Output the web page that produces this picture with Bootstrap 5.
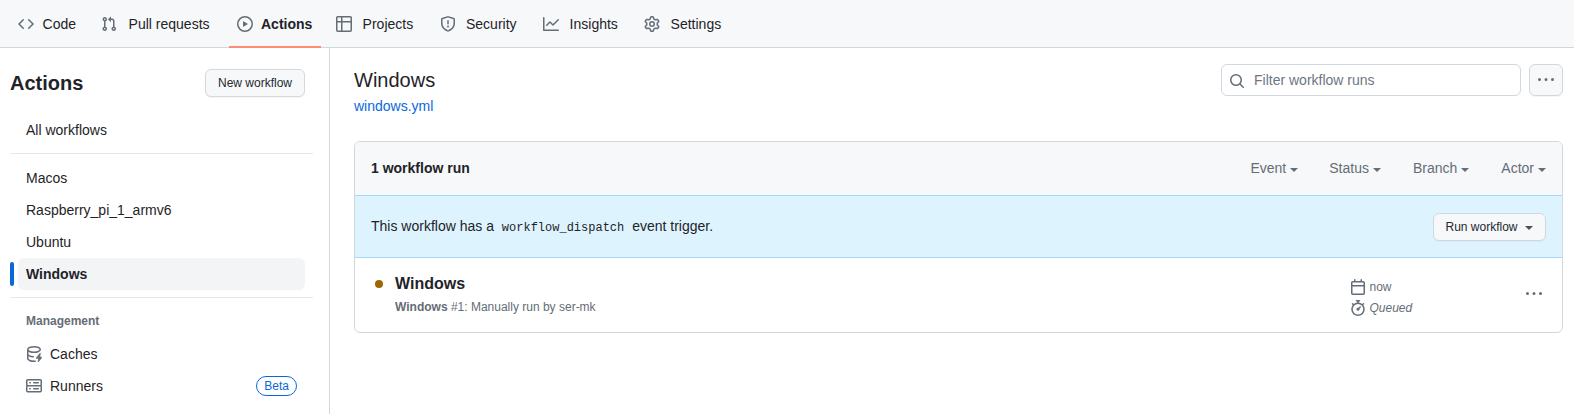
<!DOCTYPE html>
<html lang="en">
<head>
<meta charset="utf-8">
<meta name="viewport" content="width=device-width, initial-scale=1">
<title>Actions - Windows workflow runs</title>
<link href="https://cdn.jsdelivr.net/npm/bootstrap@5.3.0/dist/css/bootstrap.min.css" rel="stylesheet">
<style>
body{font-family:"Liberation Sans",Arial,sans-serif;font-size:14px;line-height:20px;color:#1f2328;background:#fff;overflow:hidden}
svg{fill:#656d76;display:block;flex:none}
.fg-muted{color:#656d76}
.repo-nav{height:48px;background:#f6f8fa;border-bottom:1px solid #d0d7de;padding-left:10px}
.repo-nav .nav-link{height:48px;padding:2px 8px 0;color:#1f2328;gap:10.6px;display:flex;align-items:center;border-bottom:2px solid transparent;white-space:nowrap}
.repo-nav .nav-link.active{font-weight:600;border-bottom-color:#fd8c73}
.repo-nav .tab-code{width:83px;gap:8.6px}
.repo-nav .tab-pulls{width:136px;gap:11.6px}
.repo-nav .tab-actions{width:92px;gap:8px;margin-right:7px}
.repo-nav .tab-projects{width:104px}
.repo-nav .tab-security{width:103px;gap:10px}
.repo-nav .tab-insights{width:101px}
.page{height:366px}
.side{width:330px;border-right:1px solid #d0d7de;padding:20px 16px 0 10px}
.side h2{font-size:20px;line-height:30px;font-weight:600}
.btn-gh{font-size:12px;line-height:20px;padding:3px 12px;border:1px solid #d3d8dd;border-radius:6px;background:#f6f8fa;color:#24292f;box-shadow:0 1px 0 rgba(31,35,40,.04);white-space:nowrap}
.side .nav-link{height:32px;margin:0 8px;padding:0 8px;color:#1f2328;border-radius:6px;display:flex;align-items:center;gap:8px}
.side .nav-link.active{background:#f3f4f6;font-weight:600;position:relative}
.side .nav-link.active::before{content:"";position:absolute;left:-8px;top:4px;width:4px;height:24px;border-radius:6px;background:#0969da}
.rule{height:1px;background:#e6e9ec;margin:7px 0 8px}
.mgmt{padding:6px 16px 8px}
.beta{border:1px solid #0969da;color:#0969da;border-radius:2em;font-size:12px;line-height:18px;padding:0 7px}
.main-col{padding:16px 11px 0 24px}
.main-col h1{font-size:20px;line-height:32px;font-weight:400}
.wf-link{color:#0969da;text-decoration:none}
.search{width:300px;height:32px;border:1px solid #d0d7de;border-radius:6px;padding:1px 7px 0;gap:9px}
.search input{border:0;outline:0;padding:0 0 1px;width:240px;color:#656d76}
.search input::placeholder{color:#6e7781;opacity:1}
.more-btn{width:34px;height:32px;padding:0}
.runs{border:1px solid #d0d7de;border-radius:6px;overflow:hidden;margin-top:25px;height:192px}
.runs-head{height:53px;background:#f6f8fa;padding:0 16px 1px}
.filters{gap:32px}
.filters span:first-child{margin-right:-1px}
.caret{display:inline-block;border:4px solid transparent;border-top-color:currentColor;border-bottom:0;margin-left:4px;vertical-align:1.5px}
.dispatch{height:63px;background:#ddf4ff;border-top:1px solid #a5d6fb;border-bottom:1px solid #a5d6fb;padding:0 16px}
.dispatch code{font-family:"Liberation Mono",monospace;font-size:12px;color:#1f2328;padding:0 4px}
.run-btn{width:113px;padding-left:11px;padding-right:12px}
.run-btn .caret{margin-left:7px;border-top-color:#4b5157;vertical-align:1px}
.run-row{padding:14px 16px 0}
.dot{width:8px;height:8px;border-radius:50%;background:#9a6700;margin:8px 12px 0 4px}
.run-title{font-size:16px;line-height:24px;font-weight:600;margin-bottom:2px}
.small-line{font-size:12px;line-height:18px}
.meta-col{width:176px;padding-top:6px}
.meta-line{height:18px;margin-bottom:2px;gap:3.5px}
.meta-line + .meta-line{height:20px}
.row-menu{margin:14px 4px 0 0}
</style>
</head>
<body>
<nav class="repo-nav nav flex-nowrap">
  <a class="nav-link tab-code"><svg width="16" height="16" viewBox="0 0 16 16"><path d="m11.28 3.22 4.25 4.25a.75.75 0 0 1 0 1.06l-4.25 4.25a.749.749 0 1 1-1.06-1.06L13.94 8l-3.72-3.72a.749.749 0 1 1 1.06-1.06Zm-6.56 0a.751.751 0 0 1 1.06 1.06L2.06 8l3.72 3.72a.749.749 0 1 1-1.06 1.06L.47 8.53a.75.75 0 0 1 0-1.06Z"/></svg>Code</a>
  <a class="nav-link tab-pulls"><svg width="16" height="16" viewBox="0 0 16 16"><path d="M1.5 3.25a2.25 2.25 0 1 1 3 2.122v5.256a2.251 2.251 0 1 1-1.5 0V5.372A2.25 2.25 0 0 1 1.5 3.25Zm5.677-.177L9.573.677A.25.25 0 0 1 10 .854V2.5h1A2.5 2.5 0 0 1 13.5 5v5.628a2.251 2.251 0 1 1-1.5 0V5a1 1 0 0 0-1-1h-1v1.646a.25.25 0 0 1-.427.177L7.177 3.427a.25.25 0 0 1 0-.354ZM3.75 2.5a.75.75 0 1 0 0 1.5.75.75 0 0 0 0-1.5Zm0 9.5a.75.75 0 1 0 0 1.5.75.75 0 0 0 0-1.5Zm8.25.75a.75.75 0 1 0 1.5 0 .75.75 0 0 0-1.5 0Z"/></svg>Pull requests</a>
  <a class="nav-link tab-actions active"><svg width="16" height="16" viewBox="0 0 16 16"><path d="M8 0a8 8 0 1 1 0 16A8 8 0 0 1 8 0ZM1.5 8a6.5 6.5 0 1 0 13 0 6.5 6.5 0 0 0-13 0Zm4.879-2.773 4.264 2.559a.25.25 0 0 1 0 .428l-4.264 2.559A.25.25 0 0 1 6 10.559V5.442a.25.25 0 0 1 .379-.215Z"/></svg>Actions</a>
  <a class="nav-link tab-projects"><svg width="16" height="16" viewBox="0 0 16 16"><path d="M0 1.75C0 .784.784 0 1.75 0h12.5C15.216 0 16 .784 16 1.75v12.5A1.75 1.75 0 0 1 14.25 16H1.75A1.75 1.75 0 0 1 0 14.25ZM6.5 6.5v8h7.75a.25.25 0 0 0 .25-.25V6.5Zm8-1.5V1.75a.25.25 0 0 0-.25-.25H6.5V5Zm-13 1.5v7.75c0 .138.112.25.25.25H5v-8ZM5 5V1.5H1.75a.25.25 0 0 0-.25.25V5Z"/></svg>Projects</a>
  <a class="nav-link tab-security"><svg width="16" height="16" viewBox="0 0 16 16"><path d="M7.467.133a1.748 1.748 0 0 1 1.066 0l5.25 1.68A1.75 1.75 0 0 1 15 3.48V7c0 1.566-.32 3.182-1.303 4.682-.983 1.498-2.585 2.813-5.032 3.855a1.697 1.697 0 0 1-1.33 0c-2.447-1.042-4.049-2.357-5.032-3.855C1.32 10.182 1 8.566 1 7V3.48a1.75 1.75 0 0 1 1.217-1.667Zm.61 1.429a.25.25 0 0 0-.153 0l-5.25 1.68a.25.25 0 0 0-.174.238V7c0 1.358.275 2.666 1.057 3.86.784 1.194 2.121 2.34 4.366 3.297a.196.196 0 0 0 .154 0c2.245-.956 3.582-2.104 4.366-3.298C13.225 9.666 13.5 8.36 13.5 7V3.48a.251.251 0 0 0-.174-.237l-5.25-1.68ZM8.75 4.75v3a.75.75 0 0 1-1.5 0v-3a.75.75 0 0 1 1.5 0ZM9 10.5a1 1 0 1 1-2 0 1 1 0 0 1 2 0Z"/></svg>Security</a>
  <a class="nav-link tab-insights"><svg width="16" height="16" viewBox="0 0 16 16"><path d="M1.5 1.75V13.5h13.75a.75.75 0 0 1 0 1.5H.75a.75.75 0 0 1-.75-.75V1.75a.75.75 0 0 1 1.5 0Zm14.28 2.53-5.25 5.25a.75.75 0 0 1-1.06 0L7 7.06 4.28 9.78a.751.751 0 0 1-1.06-1.06l3.25-3.25a.75.75 0 0 1 1.06 0L10 7.94l4.72-4.72a.751.751 0 0 1 1.06 1.06Z"/></svg>Insights</a>
  <a class="nav-link"><svg width="16" height="16" viewBox="0 0 16 16"><path d="M8 0a8.2 8.2 0 0 1 .701.031C9.444.095 9.99.645 10.16 1.29l.288 1.107c.018.066.079.158.212.224.231.114.454.243.668.386.123.082.233.09.299.071l1.103-.303c.644-.176 1.392.021 1.82.63.27.385.506.792.704 1.218.315.675.111 1.422-.364 1.891l-.814.806c-.049.048-.098.147-.088.294.016.257.016.515 0 .772-.01.147.038.246.088.294l.814.806c.475.469.679 1.216.364 1.891a7.977 7.977 0 0 1-.704 1.217c-.428.61-1.176.807-1.82.63l-1.102-.302c-.067-.019-.177-.011-.3.071a5.909 5.909 0 0 1-.668.386c-.133.066-.194.158-.211.224l-.29 1.106c-.168.646-.715 1.196-1.458 1.26a8.006 8.006 0 0 1-1.402 0c-.743-.064-1.289-.614-1.458-1.26l-.289-1.106c-.018-.066-.079-.158-.212-.224a5.738 5.738 0 0 1-.668-.386c-.123-.082-.233-.09-.299-.071l-1.103.303c-.644.176-1.392-.021-1.82-.63a8.12 8.12 0 0 1-.704-1.218c-.315-.675-.111-1.422.363-1.891l.815-.806c.05-.048.098-.147.088-.294a6.214 6.214 0 0 1 0-.772c.01-.147-.038-.246-.088-.294l-.815-.806C.635 6.045.431 5.298.746 4.623a7.92 7.92 0 0 1 .704-1.217c.428-.61 1.176-.807 1.82-.63l1.102.302c.067.019.177.011.3-.071.214-.143.437-.272.668-.386.133-.066.194-.158.211-.224l.29-1.106C6.009.645 6.556.095 7.299.03 7.53.01 7.764 0 8 0Zm-.571 1.525c-.036.003-.108.036-.137.146l-.289 1.105c-.147.561-.549.967-.998 1.189-.173.086-.34.183-.5.29-.417.278-.97.423-1.529.27l-1.103-.303c-.109-.03-.175.016-.195.045-.22.312-.412.644-.573.99-.014.031-.021.11.059.19l.815.806c.411.406.562.957.53 1.456a4.709 4.709 0 0 0 0 .582c.032.499-.119 1.05-.53 1.456l-.815.806c-.081.08-.073.159-.059.19.162.346.353.677.573.989.02.03.085.076.195.046l1.102-.303c.56-.153 1.113-.008 1.53.27.161.107.328.204.501.29.447.222.85.629.997 1.189l.289 1.105c.029.109.101.143.137.146a6.6 6.6 0 0 0 1.142 0c.036-.003.108-.036.137-.146l.289-1.105c.147-.561.549-.967.998-1.189.173-.086.34-.183.5-.29.417-.278.97-.423 1.529-.27l1.103.303c.109.029.175-.016.195-.045.22-.313.411-.644.573-.99.014-.031.021-.11-.059-.19l-.815-.806c-.411-.406-.562-.957-.53-1.456a4.709 4.709 0 0 0 0-.582c-.032-.499.119-1.05.53-1.456l.815-.806c.081-.08.073-.159.059-.19a6.464 6.464 0 0 0-.573-.989c-.02-.03-.085-.076-.195-.046l-1.102.303c-.56.153-1.113.008-1.53-.27a4.44 4.44 0 0 0-.501-.29c-.447-.222-.85-.629-.997-1.189l-.289-1.105c-.029-.11-.101-.143-.137-.146a6.6 6.6 0 0 0-1.142 0ZM11 8a3 3 0 1 1-6 0 3 3 0 0 1 6 0ZM9.5 8a1.5 1.5 0 1 0-3.001.001A1.5 1.5 0 0 0 9.5 8Z"/></svg>Settings</a>
</nav>
<div class="page d-flex">
  <aside class="side flex-shrink-0">
    <div class="d-flex justify-content-between align-items-center pe-2">
      <h2 class="m-0">Actions</h2>
      <button class="btn btn-gh">New workflow</button>
    </div>
    <nav class="nav flex-column flex-nowrap mt-3">
      <a class="nav-link">All workflows</a>
      <div class="rule"></div>
      <a class="nav-link">Macos</a>
      <a class="nav-link">Raspberry_pi_1_armv6</a>
      <a class="nav-link">Ubuntu</a>
      <a class="nav-link active">Windows</a>
      <div class="rule"></div>
      <div class="mgmt fg-muted fw-bold small-line">Management</div>
      <a class="nav-link"><svg width="16" height="16" viewBox="0 0 16 16"><path d="M2.5 5.724V8c0 .248.238.7 1.169 1.159.874.43 2.144.745 3.62.822a.75.75 0 1 1-.078 1.498c-1.622-.085-3.102-.432-4.204-.975a5.565 5.565 0 0 1-.507-.28V12.5c0 .133.058.318.282.551.227.237.591.483 1.101.707 1.015.447 2.47.742 4.117.742.406 0 .802-.018 1.183-.052a.751.751 0 1 1 .134 1.494C8.89 15.98 8.45 16 8 16c-1.805 0-3.475-.32-4.721-.869-.623-.274-1.173-.619-1.579-1.041-.408-.425-.7-.964-.7-1.59v-9c0-.626.292-1.165.7-1.591.406-.42.956-.766 1.579-1.04C4.525.32 6.195 0 8 0c1.806 0 3.476.32 4.721.869.623.274 1.173.619 1.579 1.041.408.425.7.964.7 1.59 0 .626-.292 1.165-.7 1.591-.406.42-.956.766-1.578 1.04C11.475 6.68 9.805 7 8 7c-1.805 0-3.475-.32-4.721-.869a6.15 6.15 0 0 1-.779-.407Zm0-2.224c0 .133.058.318.282.551.227.237.591.483 1.101.707C4.898 5.205 6.353 5.5 8 5.5c1.646 0 3.101-.295 4.118-.742.508-.224.873-.471 1.1-.708.224-.232.282-.417.282-.55 0-.133-.058-.318-.282-.551-.227-.237-.591-.483-1.101-.707C11.102 1.795 9.647 1.5 8 1.5c-1.646 0-3.101.295-4.118.742-.508.224-.873.471-1.1.708-.224.232-.282.417-.282.55Z"/><path stroke="#656d76" stroke-width=".5" d="M14.49 7.582a.375.375 0 0 0-.66-.313l-3.625 4.625a.375.375 0 0 0 .295.606h2.127l-.619 2.922a.375.375 0 0 0 .666.304l3.125-4.125A.375.375 0 0 0 15.5 11h-1.778l.769-3.418Z"/></svg>Caches</a>
      <a class="nav-link"><svg width="16" height="16" viewBox="0 0 16 16"><path d="M1.75 1h12.5c.966 0 1.75.784 1.75 1.75v4c0 .372-.116.717-.314 1 .198.283.314.628.314 1v4a1.75 1.75 0 0 1-1.75 1.75H1.75A1.75 1.75 0 0 1 0 12.75v-4c0-.358.109-.707.314-1a1.739 1.739 0 0 1-.314-1v-4C0 1.784.784 1 1.75 1ZM1.5 2.75v4c0 .138.112.25.25.25h12.5a.25.25 0 0 0 .25-.25v-4a.25.25 0 0 0-.25-.25H1.75a.25.25 0 0 0-.25.25Zm.25 5.75a.25.25 0 0 0-.25.25v4c0 .138.112.25.25.25h12.5a.25.25 0 0 0 .25-.25v-4a.25.25 0 0 0-.25-.25ZM7 4.75A.75.75 0 0 1 7.75 4h4.5a.75.75 0 0 1 0 1.5h-4.5A.75.75 0 0 1 7 4.75ZM7.75 10h4.5a.75.75 0 0 1 0 1.5h-4.5a.75.75 0 0 1 0-1.5ZM3 4.75A.75.75 0 0 1 3.75 4h.5a.75.75 0 0 1 0 1.5h-.5A.75.75 0 0 1 3 4.75ZM3.75 10h.5a.75.75 0 0 1 0 1.5h-.5a.75.75 0 0 1 0-1.5Z"/></svg>Runners<span class="beta ms-auto">Beta</span></a>
    </nav>
  </aside>
  <main class="main-col flex-grow-1">
    <div class="d-flex align-items-start">
      <div class="flex-grow-1">
        <h1 class="m-0">Windows</h1>
        <a class="wf-link d-block">windows.yml</a>
      </div>
      <div class="search d-flex align-items-center me-2"><svg width="16" height="16" viewBox="0 0 16 16"><path d="M10.68 11.74a6 6 0 0 1-7.922-8.982 6 6 0 0 1 8.982 7.922l3.04 3.04a.749.749 0 1 1-1.06 1.06ZM11.5 7a4.499 4.499 0 1 0-8.997 0A4.499 4.499 0 0 0 11.5 7Z"/></svg><input type="text" placeholder="Filter workflow runs"></div>
      <button class="btn btn-gh more-btn d-flex align-items-center justify-content-center" aria-label="More"><svg width="16" height="16" viewBox="0 0 16 16"><path d="M8 9a1.5 1.5 0 1 0 0-3 1.5 1.5 0 0 0 0 3ZM1.5 9a1.5 1.5 0 1 0 0-3 1.5 1.5 0 0 0 0 3Zm13 0a1.5 1.5 0 1 0 0-3 1.5 1.5 0 0 0 0 3Z"/></svg></button>
    </div>
    <section class="runs">
      <div class="runs-head d-flex align-items-center justify-content-between">
        <strong>1 workflow run</strong>
        <div class="filters d-flex fg-muted"><span>Event<i class="caret"></i></span><span>Status<i class="caret"></i></span><span>Branch<i class="caret"></i></span><span>Actor<i class="caret"></i></span></div>
      </div>
      <div class="dispatch d-flex align-items-center justify-content-between">
        <div>This workflow has a <code>workflow_dispatch</code> event trigger.</div>
        <button class="btn btn-gh run-btn">Run workflow<i class="caret"></i></button>
      </div>
      <div class="run-row d-flex">
        <div class="dot"></div>
        <div class="flex-grow-1">
          <div class="run-title">Windows</div>
          <div class="small-line fg-muted"><b>Windows</b> #1: Manually run by ser-mk</div>
        </div>
        <div class="meta-col fg-muted small-line">
          <div class="meta-line d-flex align-items-center"><svg width="16" height="16" viewBox="0 0 16 16"><path d="M4.75 0a.75.75 0 0 1 .75.75V2h5V.75a.75.75 0 0 1 1.5 0V2h1.25c.966 0 1.75.784 1.75 1.75v10.5A1.75 1.75 0 0 1 13.25 16H2.75A1.75 1.75 0 0 1 1 14.25V3.75C1 2.784 1.784 2 2.75 2H4V.75A.75.75 0 0 1 4.75 0ZM2.5 7.5v6.75c0 .138.112.25.25.25h10.5a.25.25 0 0 0 .25-.25V7.5Zm10.75-4H2.75a.25.25 0 0 0-.25.25V6h11V3.75a.25.25 0 0 0-.25-.25Z"/></svg>now</div>
          <div class="meta-line d-flex align-items-center"><svg width="16" height="16" viewBox="0 0 16 16"><path d="M5.75.75A.75.75 0 0 1 6.5 0h3a.75.75 0 0 1 0 1.5h-.75v1l-.001.041a6.724 6.724 0 0 1 3.464 1.435l.007-.006.75-.75a.749.749 0 1 1 1.06 1.06l-.75.75-.006.007a6.75 6.75 0 1 1-10.548 0L2.72 5.03l-.75-.75a.751.751 0 0 1 1.06-1.06l.75.75.007.006A6.72 6.72 0 0 1 7.25 2.541V1.5H6.5a.75.75 0 0 1-.75-.75ZM8 14.5a5.25 5.25 0 1 0-.001-10.501A5.25 5.25 0 0 0 8 14.5Zm.389-6.7 1.33-1.33a.75.75 0 1 1 1.061 1.06L9.45 8.861A1.503 1.503 0 0 1 8 10.75a1.499 1.499 0 1 1 .389-2.95Z"/></svg><em>Queued</em></div>
        </div>
        <svg class="row-menu" width="16" height="16" viewBox="0 0 16 16"><path d="M8 9a1.5 1.5 0 1 0 0-3 1.5 1.5 0 0 0 0 3ZM1.5 9a1.5 1.5 0 1 0 0-3 1.5 1.5 0 0 0 0 3Zm13 0a1.5 1.5 0 1 0 0-3 1.5 1.5 0 0 0 0 3Z"/></svg>
      </div>
    </section>
  </main>
</div>
<script src="https://cdn.jsdelivr.net/npm/bootstrap@5.3.0/dist/js/bootstrap.bundle.min.js"></script>
</body>
</html>
